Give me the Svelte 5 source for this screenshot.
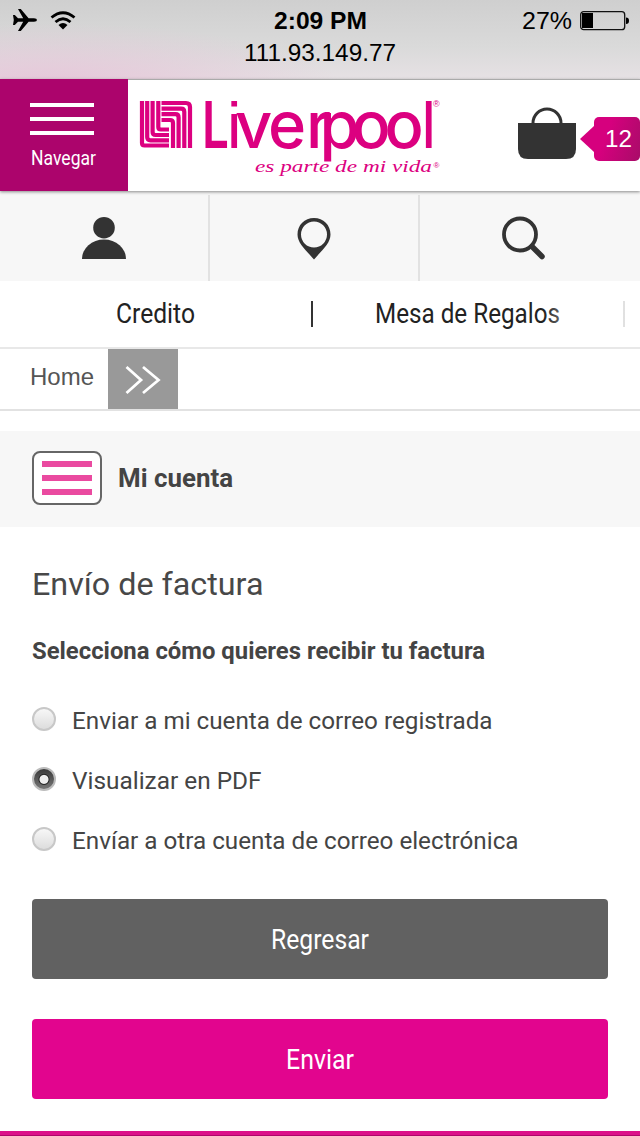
<script>
  let selected = $state('pdf');
  const options = [
    { id: 'registered', text: 'Enviar a mi cuenta de correo registrada', width: 420.5 },
    { id: 'pdf', text: 'Visualizar en PDF', width: 189.5 },
    { id: 'other', text: 'Envíar a otra cuenta de correo electrónica', width: 446.5 }
  ];
</script>

{#snippet line(text, width, height, base, kind)}
  <svg class="line {kind}" {width} {height}>
    <text x="0" y={base} textLength={width} lengthAdjust="spacingAndGlyphs">{text}</text>
  </svg>
{/snippet}

<div class="page">
  <div class="status">
    <div class="left">
      <svg width="26" height="24" viewBox="0 0 26 24"><path d="M1 7h1.800l3.200 3.200h5.200L6 1h2.800l7.800 9.200H22q3 .3 3 1.800t-3 1.800h-5.400L8.800 23H6l5.200-9.200H6L2.800 17H1l.8-5z" /></svg>
      <svg width="26" height="19" viewBox="0 0 26 19"><path d="M1.500 6.500Q13-3 24.500 6.500M5.500 11Q13 4.500 20.500 11" fill="none" stroke="#000" stroke-width="2.800" /><path d="M8.500 14Q13 10 17.500 14L13 18.500z" /></svg>
    </div>
    <div class="mid">
      {@render line('2:09 PM', 93, 32, 21, 'sans b')}
      {@render line('111.93.149.77', 152, 32, 21, 'sans')}
    </div>
    <div class="right">
      {@render line('27%', 50, 32, 21, 'sans')}
      <svg width="50" height="20" viewBox="0 0 50 20"><rect x=".7" y=".7" width="44" height="18" rx="3" fill="none" stroke="#111" stroke-width="1.300" /><path d="M2 2h11v15H2zM46 6.500q3 0 3 3.200t-3 3.200z" /></svg>
    </div>
  </div>

  <header>
    <button class="navegar" aria-label="Navegar">
      <i></i><i></i><i></i>
      {@render line('Navegar', 65, 26, 20, 'cond')}
    </button>
    <svg class="logo" width="312" height="111" viewBox="128 80 312 111">
      <g fill="none" stroke="#dc0080" stroke-width="4.200">
        <path d="M142 101V143q0 2.500 2.500 2.500H169" />
        <path d="M147.200 101V137q0 3.300 3.300 3.300H169" />
        <path d="M152.600 101V132q0 3 3 3H169" />
        <path d="M158.300 101V127q0 2.500 2.500 2.500H169" />
        <path d="M161.500 103H186q4 0 4 4V148" />
        <path d="M161.500 108.600H181q3.300 0 3.300 3.300V148" />
        <path d="M161.500 114.200H175.300q3.300 0 3.300 3.300V148" />
        <path d="M161.500 120H170q3 0 3 3V148" />
      </g>
      <text class="word heavy" x="202" y="148" textLength="27" lengthAdjust="spacingAndGlyphs">L</text>
      <text class="word" y="148"><tspan class="square" x="227">i</tspan><tspan x="235 268 306 319.500 351.500 384.500">verpoo</tspan><tspan class="square bar" x="421.500">l</tspan></text>
      <text class="reg" x="433" y="107">®</text>
      <text class="tag" x="255" y="172" textLength="177" lengthAdjust="spacingAndGlyphs">es parte de mi vida</text>
      <text class="reg small" x="433.500" y="168">®</text>
    </svg>
    <div class="cart">
      <svg width="58" height="53" viewBox="518 107 58 53"><path d="M518 123h58v26q0 10-10 10h-38q-10 0-10-10z" fill="#333" /><path d="M533 123a14 14 0 0 1 28 0" fill="none" stroke="#333" stroke-width="3" /></svg>
      <div class="count">{@render line('12', 27, 44, 30, 'sans')}</div>
    </div>
  </header>

  <nav class="tools">
    <span><svg width="44" height="44" viewBox="82 216 44 44" fill="#333"><circle cx="104" cy="227.700" r="10.800" /><path d="M82 259a22 19.500 0 0 1 44 0z" /></svg></span>
    <span><svg width="44" height="44" viewBox="292 216 44 44"><path fill="#333" fill-rule="evenodd" d="M314 218c-9.500 0-16.500 7-16.500 16.500C297.500 243 305 249 314 259.500 323 249 330.500 243 330.500 234.500c0-9.500-7-16.500-16.500-16.500m0 3.500a13 13 0 1 1 0 26 13 13 0 1 1 0-26" /></svg></span>
    <span><svg width="44" height="44" viewBox="501 216 44 44" fill="none" stroke="#333"><circle cx="520" cy="234.500" r="16" stroke-width="3.800" /><path d="M532 246.500l10 10" stroke-width="5.500" stroke-linecap="round" /></svg></span>
  </nav>

  <nav class="menu">
    {@render line('Credito', 79, 66, 42, 'cond dark')}
    <i></i>
    {@render line('Mesa de Regalos', 185, 66, 42, 'cond dark')}
    <i></i>
  </nav>

  <div class="crumbs">
    {@render line('Home', 64, 60, 36, 'sans grey')}
    <span><svg width="36" height="30" viewBox="0 0 36 30" fill="none" stroke="#fff" stroke-width="2.800"><path d="M1.500 2L16 15 1.500 28M18 2l15.500 13L18 28" /></svg></span>
  </div>

  <div class="account">
    <button aria-label="Mi cuenta"><i></i><i></i><i></i></button>
    {@render line('Mi cuenta', 115, 54, 36, 'h3')}
  </div>

  <main>
    {@render line('Envío de factura', 231.5, 60, 39, 'h1')}
    {@render line('Selecciona cómo quieres recibir tu factura', 453, 60, 43, 'h2')}
    <div class="options">
      {#each options as o}
        <label>
          <input type="radio" name="delivery" value={o.id} bind:group={selected} />
          <span class="dot"></span>
          {@render line(o.text, o.width, 60, 40, 'body')}
        </label>
      {/each}
    </div>
    <button class="action">{@render line('Regresar', 98, 80, 50, 'cond')}</button>
    <button class="action pink">{@render line('Enviar', 68, 80, 50, 'cond')}</button>
  </main>
  <footer></footer>
</div>

<style>
  :global(body) { background: #fff; }
  .page { width: 640px; height: 1136px; display: flex; flex-direction: column; overflow: hidden; font-family: Roboto, sans-serif; background: #fff; }
  svg { display: block; flex: none; }
  button { border: 0; padding: 0; margin: 0; font: inherit; }
  .line { overflow: visible; font: 24px Roboto, sans-serif; fill: #444; }
  .sans { font-family: "Liberation Sans", sans-serif; fill: #000; }
  .b { font-weight: 700; }
  .cond { font-size: 27px; fill: #fff; }
  .dark { fill: #222; }
  .grey { fill: #555; }
  .h1 { font-size: 31.5px; fill: #484848; }
  .h2 { font-weight: 700; }
  .h3 { font-size: 26px; font-weight: 700; }

  .status { height: 79px; flex: none; box-sizing: border-box; padding: 8px 10px 0 11px; display: grid; grid-template-columns: 1fr 153px 1fr; background: radial-gradient(ellipse 290px 62px at 50px 85px, #e6c6d9, #e6c6d900), linear-gradient(#cfcfcf, #dadada 60%, #e6e1e4); }
  .left { display: flex; gap: 12px; padding-left: 1px; }
  .left svg + svg { margin-top: 3px; }
  .mid { display: flex; flex-direction: column; align-items: center; padding-right: 1px; }
  .right { display: flex; justify-content: flex-end; gap: 8px; }
  .right svg + svg { margin-top: 3px; }

  header { height: 112px; box-sizing: border-box; flex: none; display: flex; background: #fff; border-top: 1px solid #aaa; box-shadow: 0 1px 3px #888; position: relative; }
  .navegar { width: 128px; height: 112px; margin-top: -1px; background: #ac046c; display: flex; flex-direction: column; align-items: center; padding-top: 24px; gap: 10px; box-sizing: border-box; padding-right: 4px; }
  .navegar i { width: 64px; height: 4px; background: #fff; flex: none; }
  .navegar .line { font-size: 19.5px; margin-left: 3px; }
  .word { font: 500 65px Inter, sans-serif; fill: #dc0080; }
  .heavy { font-weight: 600; }
  .square { font-family: "Liberation Sans", sans-serif; font-weight: 400; }
  .reg { font: 9px "Liberation Sans", sans-serif; fill: #dc0080; }
  .small { font-size: 8px; }
  .tag { font: italic 17px "Liberation Serif", serif; fill: #dc0080; }
  .cart { margin-left: 78px; display: flex; padding-top: 27px; }
  .count { margin: 10px 0 0 18px; width: 46px; height: 44px; box-sizing: border-box; padding-left: 11px; border-radius: 5px; background: linear-gradient(110deg, #d6007e 30%, #a80c68); position: relative; }
  .count::before { content: ""; position: absolute; left: -14px; top: 9px; border: solid transparent; border-width: 13px 14px 13px 0; border-right-color: #d6007e; }
  .count .line { fill: #fff; }

  .tools { height: 90px; flex: none; box-sizing: border-box; padding-top: 4px; background: #f7f7f7; display: grid; grid-template-columns: 210px 210px 220px; }
  .tools span { border-right: 2px solid #e2e2e2; display: flex; justify-content: center; padding-top: 21px; }
  .tools span:last-child { border: 0; padding-right: 14px; }
  .menu { height: 66px; flex: none; border-bottom: 2px solid #e8e8e8; display: flex; padding-left: 116px; position: relative; }
  .menu i { width: 2px; height: 26px; margin: 20px 62px 0 116px; background: #333; }
  .menu i:last-child { margin: 20px 0 0 63px; }
  .menu::after { content: ""; position: absolute; right: 0; top: 0; width: 96px; height: 66px; background: linear-gradient(90deg, #fff0, #ffffffd9 50%, #ffffffd9); }
  .crumbs { height: 60px; flex: none; border-bottom: 2px solid #e2e2e2; display: flex; padding-left: 30px; gap: 14px; }
  .crumbs span { width: 70px; background: #999; display: flex; align-items: center; justify-content: center; padding-top: 2px; box-sizing: border-box; }
  .account { margin-top: 20px; height: 96px; flex: none; box-sizing: border-box; padding: 20px 32px; background: #f7f7f7; display: flex; gap: 16px; }
  .account button { width: 70px; height: 54px; box-sizing: border-box; border: 2px solid #666; border-radius: 8px; background: #fff; display: flex; flex-direction: column; align-items: center; padding-top: 8px; gap: 8px; }
  .account i { width: 50px; height: 6px; background: #ea4aa0; }
  main { padding: 29px 32px 0; display: flex; flex-direction: column; flex: 1; }
  .options { margin: 13px 0 30px; }
  label { display: flex; height: 60px; gap: 16px; }
  input { appearance: none; width: 0; height: 0; margin: 0 -16px 0 0; }
  .dot { width: 24px; height: 24px; margin-top: 18px; box-sizing: border-box; border: 2px solid #c8c8c8; border-radius: 50%; background: linear-gradient(#fafafa, #dadada); background-origin: border-box; }
  input:checked + .dot { border-color: #bbb; background: radial-gradient(circle at 50% 52%, #eee 0 4px, #222 5px, #4440 6px), linear-gradient(#393939, #777); }
  .action { height: 80px; flex: none; border-radius: 4px; background: #616161; display: flex; justify-content: center; }
  .pink { margin-top: 40px; background: #e2058e; }
  footer { height: 5px; flex: none; box-sizing: border-box; background: #dc108a; border-bottom: 1px solid #ad0869; }
</style>
